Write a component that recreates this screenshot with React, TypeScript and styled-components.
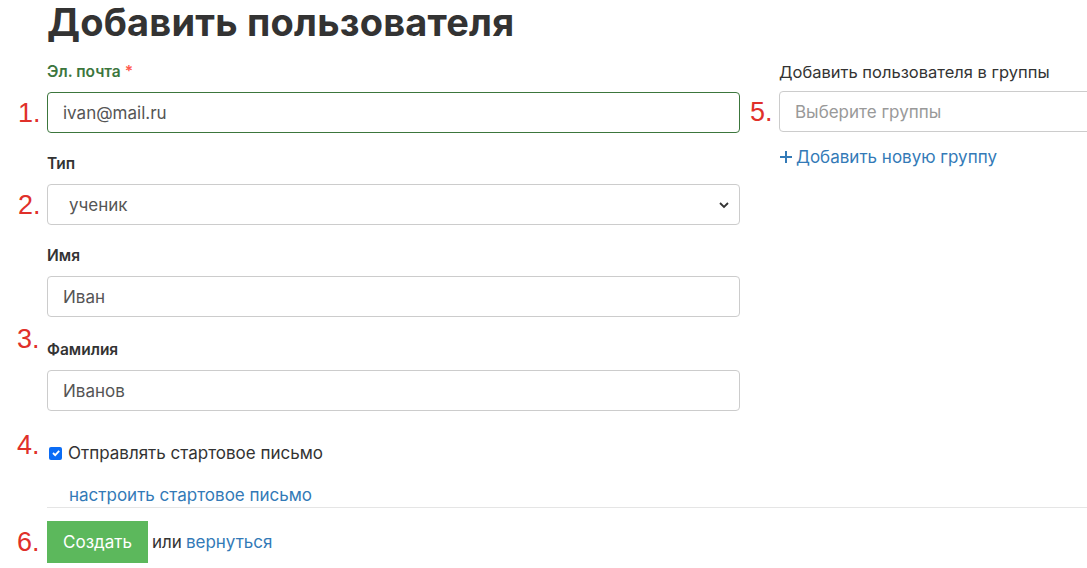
import React from "react";
import styled, { createGlobalStyle } from "styled-components";

const Global = createGlobalStyle`
  body { margin: 0; font-family: Inter, "Noto Sans", sans-serif; color: #333; background: #fff; overflow: hidden; }
`;

const Page = styled.div`
  padding-left: 47px;
  width: 1087px;
  box-sizing: border-box;
  overflow: hidden;
`;
const Title = styled.h1`
  margin: 0;
  height: 46px;
  font-size: 38px;
  font-weight: 700;
  line-height: 44px;
  color: #333;
  letter-spacing: 0.2px;
`;
const Columns = styled.div`
  display: flex;
  gap: 39px;
  margin-top: 16px;
`;
const Left = styled.div`
  width: 693px;
  flex: none;
  display: flex;
  flex-direction: column;
`;
const Right = styled.div`
  width: 340px;
  flex: none;
  display: flex;
  flex-direction: column;
`;
const Field = styled.div<{ $mb?: number }>`
  position: relative;
  display: flex;
  flex-direction: column;
  margin-bottom: ${(p) => p.$mb ?? 24}px;
`;
const Label = styled.label<{ $ok?: boolean; $plain?: boolean }>`
  font-size: ${(p) => (p.$plain ? 16.5 : 15.5)}px;
  font-weight: ${(p) => (p.$plain ? 400 : 600)};
  color: ${(p) => (p.$ok ? "#3c763d" : "#333")};
  line-height: 20px;
  margin-bottom: 10px;
`;
const Star = styled.span`
  color: #ff5a4e;
`;
const Input = styled.div<{ $ok?: boolean; $muted?: boolean }>`
  position: relative;
  height: 41px;
  box-sizing: border-box;
  border: 1px solid ${(p) => (p.$ok ? "#3c763d" : "#ccc")};
  border-radius: 4px;
  padding: 0 15px;
  display: flex;
  align-items: center;
  font-size: 17px;
  color: ${(p) => (p.$muted ? "#999" : "#555")};
`;
const Num = styled.span<{ $top: number }>`
  position: absolute;
  left: -30px;
  top: ${(p) => p.$top}px;
  font-family: "Liberation Sans", Arial, sans-serif;
  font-size: 27px;
  color: #e0302a;
  line-height: 30px;
`;
const Group = styled.div`
  position: relative;
`;
const Check = styled.div`
  position: relative;
  display: flex;
  align-items: center;
  gap: 6px;
  font-size: 17px;
  color: #333;
  margin-top: 10px;
`;
const Box = styled.span`
  width: 13px;
  height: 13px;
  border-radius: 2px;
  background: #0b6cf5;
  display: inline-flex;
  align-items: center;
  justify-content: center;
  margin-left: 2px;
`;
const Link = styled.a`
  color: #337ab7;
  font-size: 17px;
  text-decoration: none;
`;
const SetupLink = styled(Link)`
  display: block;
  margin: 20px 0 0 22px;
  line-height: 24px;
`;
const Rule = styled.div`
  border-top: 1px solid #e5e5e5;
  margin-top: 0px;
  width: 1040px;
`;
const Actions = styled.div`
  position: relative;
  display: flex;
  align-items: center;
  gap: 4px;
  margin-top: 13px;
  font-size: 17px;
`;
const Button = styled.button`
  background: #5cb85c;
  color: #fff;
  border: none;
  height: 42px;
  width: 101px;
  font-family: inherit;
  font-size: 17px;
  padding: 0;
`;
const AddLink = styled(Link)`
  display: flex;
  align-items: center;
  gap: 3px;
  margin-top: 15px;
`;

export default function App() {
  return (
    <Page>
      <Global />
      <Title>Добавить пользователя</Title>
      <Columns>
        <Left>
          <Field $mb={21}>
            <Label $ok>
              Эл. почта <Star>*</Star>
            </Label>
            <Input $ok>
              <Num $top={5}>1.</Num>ivan@mail.ru
            </Input>
          </Field>
          <Field $mb={21}>
            <Label>Тип</Label>
            <Input style={{ paddingLeft: 21 }}>
              <Num $top={5}>2.</Num>ученик
              <svg width="12" height="12" viewBox="0 0 12 12" style={{ marginLeft: "auto", marginRight: -6 }}>
                <path d="M2 4l4 4 4-4" fill="none" stroke="#333" strokeWidth="1.8" />
              </svg>
            </Input>
          </Field>
          <Group>
            <Num $top={78}>3.</Num>
            <Field $mb={23}>
              <Label>Имя</Label>
              <Input>Иван</Input>
            </Field>
            <Field $mb={22}>
              <Label>Фамилия</Label>
              <Input>Иванов</Input>
            </Field>
          </Group>
          <Check>
            <Num $top={-13}>4.</Num>
            <Box>
              <svg width="10" height="10" viewBox="0 0 10 10">
                <path d="M2 5l2.2 2.2L8.2 2.8" fill="none" stroke="#fff" strokeWidth="1.8" />
              </svg>
            </Box>
            Отправлять стартовое письмо
          </Check>
          <SetupLink>настроить стартовое письмо</SetupLink>
          <Rule />
          <Actions>
            <Num $top={6}>6.</Num>
            <Button>Создать</Button>
            или <Link>вернуться</Link>
          </Actions>
        </Left>
        <Right>
          <Label $plain style={{ marginBottom: 9 }}>Добавить пользователя в группы</Label>
          <Input $muted>
            <Num $top={5}>5.</Num>Выберите группы
          </Input>
          <AddLink>
            <svg width="14" height="14" viewBox="0 0 14 14">
              <path d="M7 1v12M1 7h12" stroke="#337ab7" strokeWidth="2" />
            </svg>
            Добавить новую группу
          </AddLink>
        </Right>
      </Columns>
    </Page>
  );
}
